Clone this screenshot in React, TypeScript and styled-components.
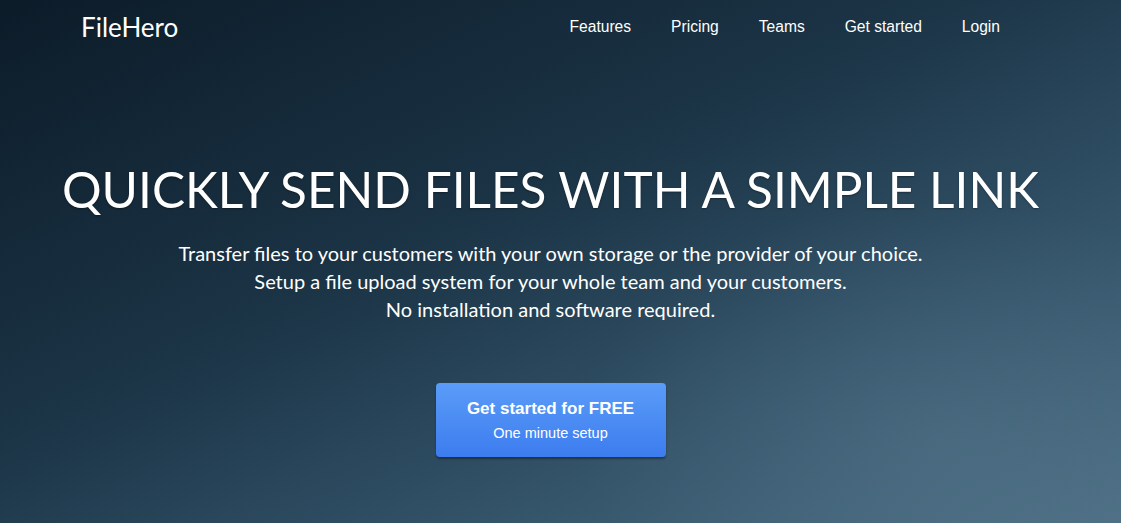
import React from "react";
import styled, { createGlobalStyle } from "styled-components";

const Global = createGlobalStyle`
  html, body { margin: 0; padding: 0; }
  body { width: 1121px; height: 523px; overflow: hidden; }
  #root { height: 100%; }
`;

const Page = styled.div`
  width: 1121px;
  height: 523px;
  background: linear-gradient(to bottom right, #0c1b28 0%, #1b3446 42%, #34546a 72%, #4d6e84 100%);
  position: relative;
  overflow: hidden;
  color: #fff;
`;

const Glow = styled.div`
  position: absolute;
  inset: 0;
  background: radial-gradient(ellipse 520px 340px at 940px 440px, rgba(95, 130, 150, 0.3), rgba(95, 130, 150, 0) 70%);
  pointer-events: none;
`;

const Inner = styled.div`
  position: relative;
  width: 1101px;
  display: flex;
  flex-direction: column;
`;

const Header = styled.header`
  display: flex;
  align-items: center;
  justify-content: space-between;
  height: 54px;
  padding: 0 101px 0 81px;
`;

const Logo = styled.div`
  font-family: Lato, "Noto Sans", sans-serif;
  font-size: 26px;
  font-weight: 400;
  color: #fff;
`;

const Nav = styled.nav`
  display: flex;
  gap: 40px;
`;

const NavLink = styled.a`
  font-family: "Liberation Sans", Arial, sans-serif;
  font-size: 15.6px;
  color: #fff;
  text-decoration: none;
`;

const Hero = styled.main`
  display: flex;
  flex-direction: column;
  align-items: center;
  padding-top: 106px;
`;

const Title = styled.h1`
  margin: 0;
  font-family: Lato, "Noto Sans", sans-serif;
  font-weight: 400;
  font-size: 49.5px;
  line-height: 58px;
  color: #fff;
  text-shadow: 0 1px 2px rgba(0, 0, 0, 0.35);
  white-space: nowrap;
`;

const Sub = styled.p`
  margin: 21px 0 0;
  font-family: Lato, "Noto Sans", sans-serif;
  font-size: 20px;
  line-height: 28px;
  text-align: center;
  color: #fff;
`;

const Cta = styled.a`
  margin-top: 60px;
  width: 230px;
  height: 74px;
  box-sizing: border-box;
  border-radius: 4px;
  background: linear-gradient(180deg, #5a9cf8 0%, #3d7cef 100%);
  box-shadow: 0 2px 2px rgba(0, 0, 0, 0.35);
  display: flex;
  flex-direction: column;
  align-items: center;
  justify-content: center;
  gap: 5px;
  text-decoration: none;
  color: #fff;
  font-family: "Liberation Sans", Arial, sans-serif;
`;

const CtaMain = styled.span`
  font-size: 17px;
  font-weight: 700;
  line-height: 20px;
`;

const CtaSub = styled.span`
  font-size: 14.5px;
  line-height: 18px;
`;

export default function App() {
  return (
    <>
      <Global />
      <Page>
        <Glow />
        <Inner>
          <Header>
            <Logo>FileHero</Logo>
            <Nav>
              {["Features", "Pricing", "Teams", "Get started", "Login"].map((l) => (
                <NavLink key={l} href="#">{l}</NavLink>
              ))}
            </Nav>
          </Header>
          <Hero>
            <Title>QUICKLY SEND FILES WITH A SIMPLE LINK</Title>
            <Sub>
              Transfer files to your customers with your own storage or the provider of your choice.
              <br />
              Setup a file upload system for your whole team and your customers.
              <br />
              No installation and software required.
            </Sub>
            <Cta href="#">
              <CtaMain>Get started for FREE</CtaMain>
              <CtaSub>One minute setup</CtaSub>
            </Cta>
          </Hero>
        </Inner>
      </Page>
    </>
  );
}
